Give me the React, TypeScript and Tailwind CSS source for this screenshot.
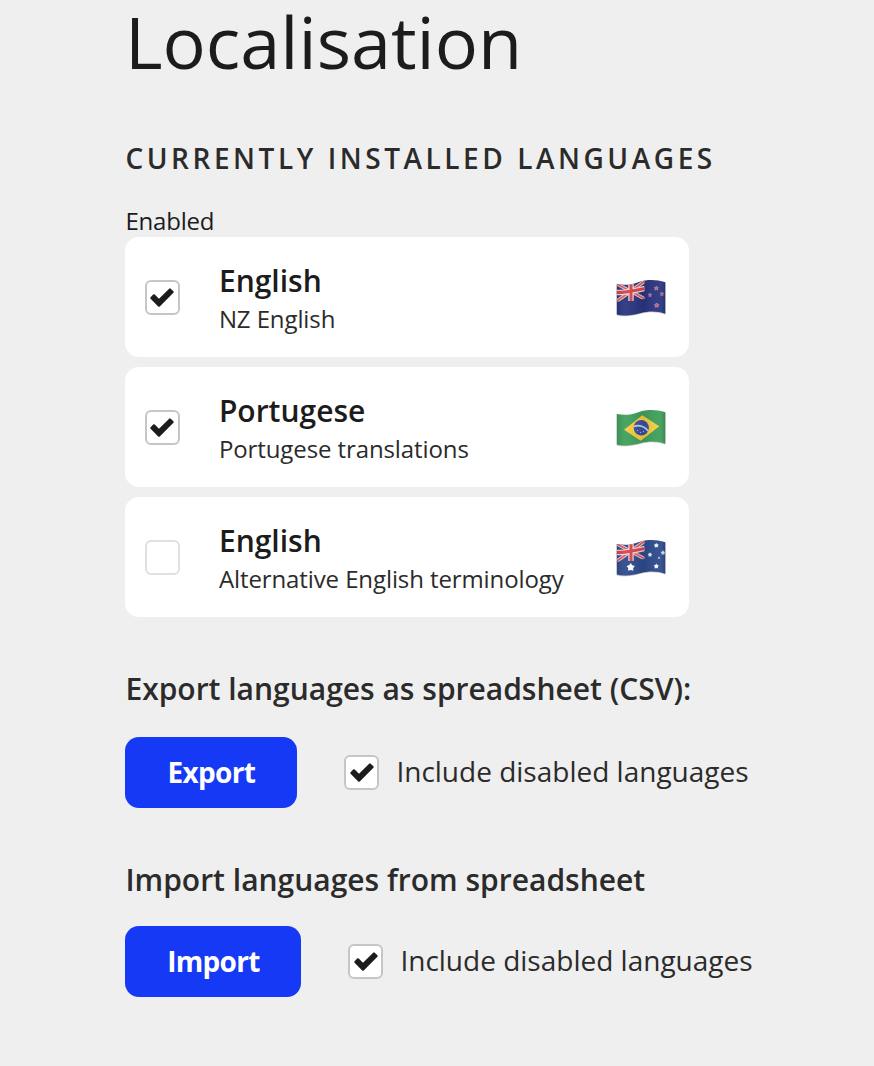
import { useId, useState } from "react";

type Country = "nz" | "br" | "au";

const WAVE =
  "M.8 5 C8 6.5 15 6 23 3 C32 .2 40 .5 49.3 3.2 V34.8 C42 32 33 31.8 25 34 C16 36.8 8 37 .8 35.6 Z";

function Star({ x, y, r, fill, stroke }: { x: number; y: number; r: number; fill: string; stroke?: string }) {
  const points = Array.from({ length: 10 }, (_, i) => {
    const a = (Math.PI * i) / 5 - Math.PI / 2;
    const d = i % 2 ? r * 0.6 : r;
    return `${x + d * Math.cos(a)},${y + d * Math.sin(a)}`;
  }).join(" ");
  return <polygon points={points} fill={fill} stroke={stroke} strokeWidth={0.6} />;
}

function UnionJack() {
  return (
    <g>
      <path d="M1 5 L29 20 M1 22 L29 2" stroke="#e9ccd4" strokeWidth="3.6" />
      <path d="M1 5 L29 20 M1 22 L29 2" stroke="#de5a5f" strokeWidth="1.6" />
      <path d="M15 3 V22 M0 13.5 C10 14 18 11.5 29 9.5" fill="none" stroke="#f0dade" strokeWidth="5.4" />
      <path d="M15 3 V22 M0 13.5 C10 14 18 11.5 29 9.5" fill="none" stroke="#d9444b" strokeWidth="3" />
    </g>
  );
}

function Flag({ country }: { country: Country }) {
  const id = useId();
  const base = { nz: "#29347f", br: "#3f9f5b", au: "#2d4a8c" }[country];
  return (
    <svg viewBox="0 0 50 38" className="mt-0.5 h-[38px] w-[50px] shrink-0" aria-hidden="true">
      <defs>
        <clipPath id={`${id}-w`}>
          <path d={WAVE} />
        </clipPath>
        <clipPath id={`${id}-j`}>
          <path d="M0 0 H28.5 V20 C20 21 12 24 0 22.5 Z" />
        </clipPath>
        <linearGradient id={`${id}-s`}>
          <stop offset="0" stopColor="#000" stopOpacity=".12" />
          <stop offset=".2" stopColor="#fff" stopOpacity=".06" />
          <stop offset=".55" stopColor="#000" stopOpacity=".08" />
          <stop offset=".85" stopColor="#fff" stopOpacity=".05" />
          <stop offset="1" stopColor="#000" stopOpacity=".2" />
        </linearGradient>
      </defs>
      <path d={WAVE} transform="translate(0 .8)" fill="#000" opacity=".25" />
      <g clipPath={`url(#${id}-w)`}>
        <rect width="50" height="38" fill={base} />
        {country === "br" ? (
          <>
            <path d="M8 20.8 L26.3 6.3 L43.3 17.2 L24.7 31.8 Z" fill="#f4cc3d" />
            <ellipse cx="25.3" cy="18.8" rx="7.6" ry="7.8" fill="#3b4f9d" />
            <path d="M18 17.5 C23 15.5 29 17.5 32.2 22" fill="none" stroke="#c9d3e8" strokeWidth="1.7" />
            <path d="M21 21.5 h1 M24 23.5 h1 M27 22.5 h1" stroke="#aab7dc" strokeWidth="1" />
          </>
        ) : (
          <g clipPath={`url(#${id}-j)`}>
            <UnionJack />
          </g>
        )}
        {country === "au" && (
          <>
            <Star x={14.7} y={28.3} r={4.4} fill="#fff" />
            <Star x={40.3} y={6.5} r={2.6} fill="#f3f5fb" />
            <Star x={34} y={15.7} r={2.4} fill="#dfe5f3" />
            <Star x={47} y={13.7} r={2.4} fill="#dfe5f3" />
            <Star x={40.3} y={27.3} r={2.8} fill="#f3f5fb" />
            <Star x={43} y={18.9} r={1.3} fill="#c3cde5" />
          </>
        )}
        {country === "nz" && (
          <>
            <Star x={40.3} y={9.3} r={2.1} fill="#c9566f" stroke="#b9a3c4" />
            <Star x={34} y={16} r={1.9} fill="#c9566f" stroke="#a294bd" />
            <Star x={46} y={15} r={1.9} fill="#c9566f" stroke="#a294bd" />
            <Star x={40.7} y={26.3} r={2.4} fill="#c9566f" stroke="#b9a3c4" />
          </>
        )}
        <rect width="50" height="38" fill={`url(#${id}-s)`} />
      </g>
    </svg>
  );
}

function Checkbox({ initial, label }: { initial: boolean; label: string }) {
  const [checked, setChecked] = useState(initial);
  return (
    <button
      type="button"
      role="checkbox"
      aria-checked={checked}
      aria-label={label}
      onClick={() => setChecked(!checked)}
      className={`flex h-[35px] w-[35px] shrink-0 items-center justify-center rounded-[6px] border-2 bg-white ${
        checked ? "border-[#c6c6c6]" : "border-[#e0e0e0]"
      }`}
    >
      {checked && (
        <svg viewBox="1.6 1.5 21.2 17" className="h-[19px] w-6" aria-hidden="true">
          <path
            d="M2 9.7 L4.3 7.4 Q5 6.8 5.7 7.4 L9.5 11.2 L18.6 2.1 Q19.3 1.4 20 2.1 L22.4 4.4 Q23 5.1 22.4 5.8 L10.2 18 Q9.5 18.6 8.8 18 L2 11.1 Q1.4 10.4 2 9.7 Z"
            fill="#1c1c1c"
          />
        </svg>
      )}
    </button>
  );
}

const languages: { name: string; detail: string; country: Country; enabled: boolean }[] = [
  { name: "English", detail: "NZ English", country: "nz", enabled: true },
  { name: "Portugese", detail: "Portugese translations", country: "br", enabled: true },
  { name: "English", detail: "Alternative English terminology", country: "au", enabled: false },
];

function TransferRow({ action, width }: { action: string; width: string }) {
  return (
    <div className="flex h-[71px] items-center">
      <button
        type="button"
        className={`${width} h-[71px] rounded-[14px] bg-[#1639f5] pb-0.5 text-[28px] leading-10 font-bold tracking-[-0.7px] text-white`}
      >
        {action}
      </button>
      <div className="ml-[47px] flex items-center gap-[17px]">
        <Checkbox initial label="Include disabled languages" />
        <span className="pb-[3px] text-[28px] leading-10 whitespace-nowrap text-[#2b2b2b]">
          Include disabled languages
        </span>
      </div>
    </div>
  );
}

export default function App() {
  return (
    <main className="h-[1066px] w-full overflow-hidden bg-[#efefef] pl-[125.4px] font-['Open_Sans',sans-serif] text-[#1c1c1c]">
      <h1 className="-ml-[0.5px] text-[72px] leading-[82px] whitespace-nowrap">Localisation</h1>
      <h2 className="mt-[56px] text-[28px] leading-10 font-semibold tracking-[3.55px] whitespace-nowrap text-[#2b2b2b] uppercase">
        Currently installed languages
      </h2>
      <p className="mt-[27px] text-[24px] leading-8 tracking-[-0.2px]">Enabled</p>
      <ul className="flex w-[564px] flex-col gap-[10px]">
        {languages.map((lang) => (
          <li key={lang.detail} className="flex h-[120px] items-center rounded-[14px] bg-white pr-[23px] pl-[19.5px]">
            <Checkbox initial={lang.enabled} label={`${lang.name} enabled`} />
            <div className="ml-[39px] flex-1 pt-1.5">
              <div className="text-[30px] leading-[38px] font-semibold">{lang.name}</div>
              <div className="text-[24px] leading-[38px] tracking-[-0.1px] text-[#2b2b2b]">{lang.detail}</div>
            </div>
            <Flag country={lang.country} />
          </li>
        ))}
      </ul>
      <h3 className="mt-[52px] text-[30px] leading-10 font-semibold text-[#2b2b2b]">
        Export languages as spreadsheet (CSV):
      </h3>
      <div className="mt-7">
        <TransferRow action="Export" width="w-[172px]" />
      </div>
      <h3 className="mt-[52px] text-[30px] leading-10 font-semibold text-[#2b2b2b]">
        Import languages from spreadsheet
      </h3>
      <div className="mt-[26px]">
        <TransferRow action="Import" width="w-[176px]" />
      </div>
    </main>
  );
}
